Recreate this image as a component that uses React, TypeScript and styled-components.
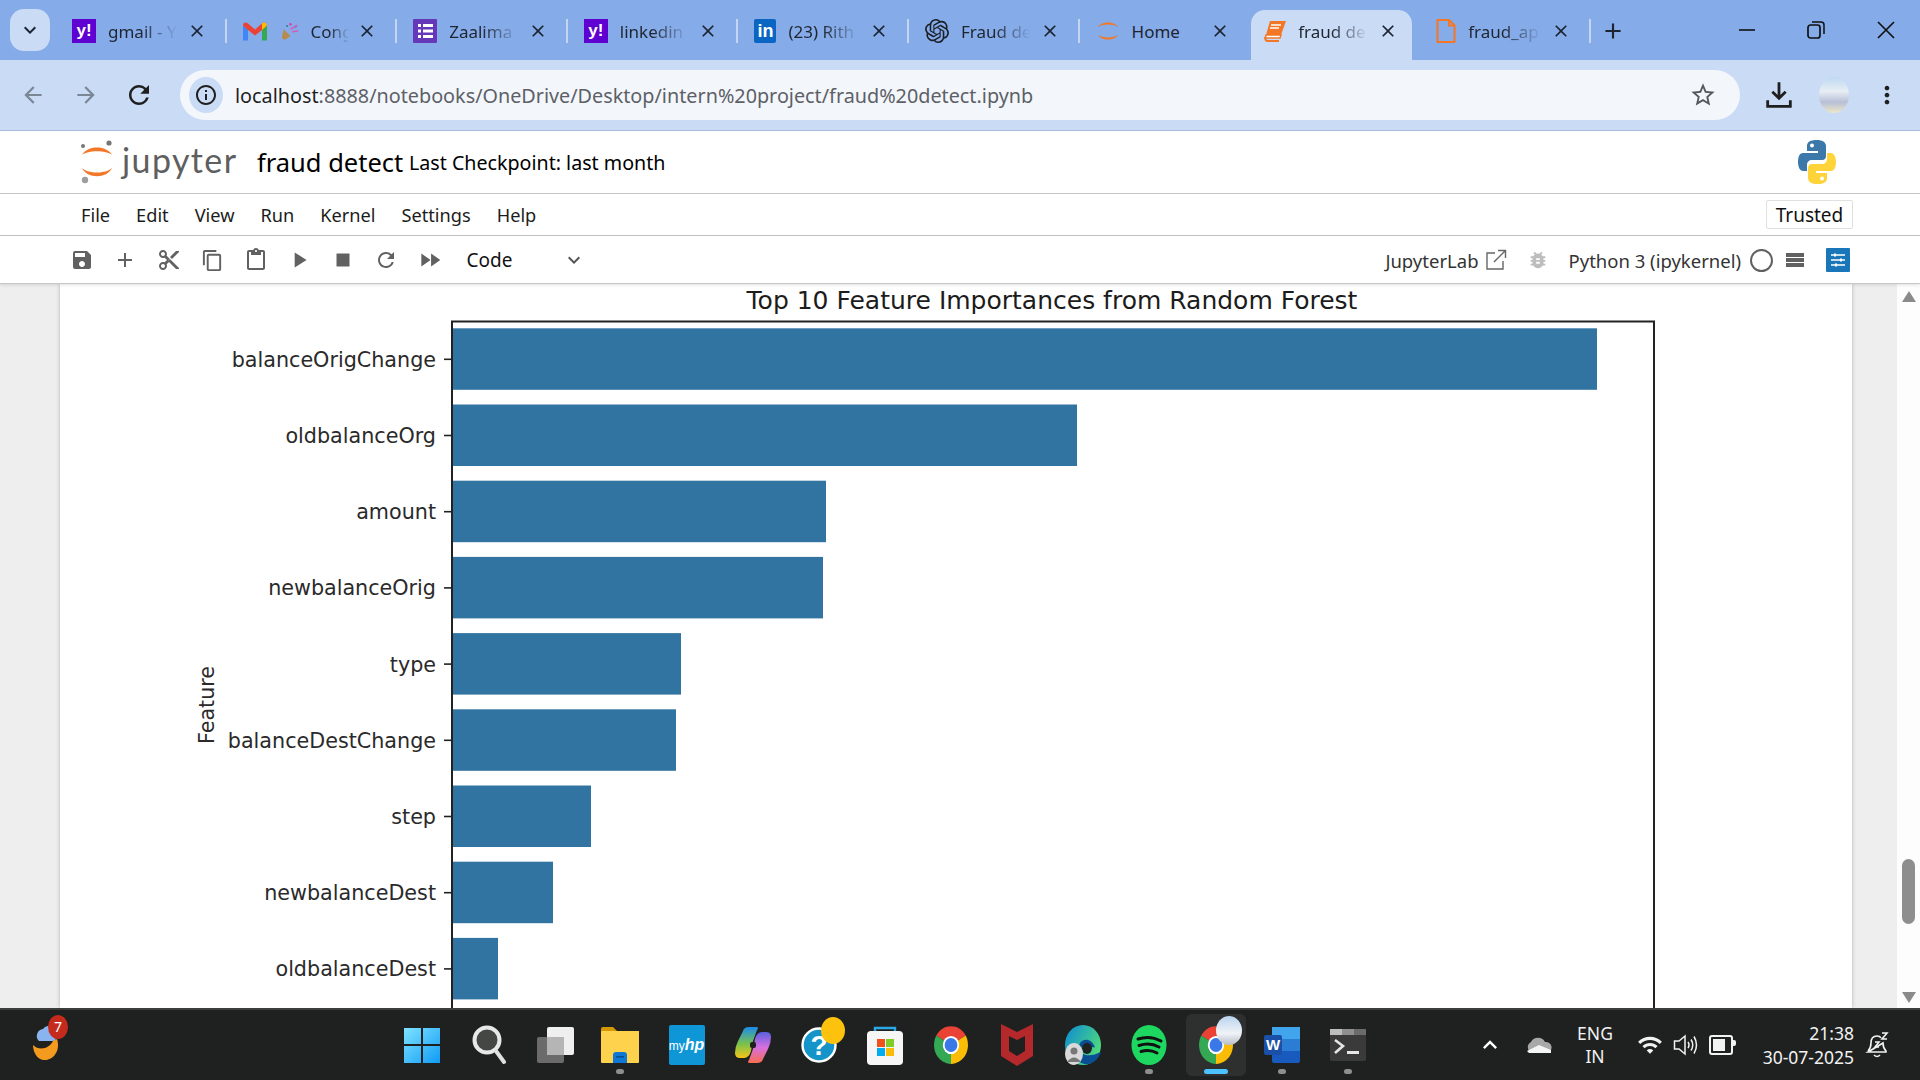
import React from "react";
import styled, { createGlobalStyle } from "styled-components";
import {
  MdAdd,
  MdArrowBack,
  MdArrowForward,
  MdBugReport,
  MdClose,
  MdContentCopy,
  MdContentCut,
  MdContentPaste,
  MdFastForward,
  MdKeyboardArrowDown,
  MdMoreVert,
  MdPlayArrow,
  MdRefresh,
  MdSave,
  MdStop,
  MdStarBorder,
  MdOutlineInfo,
  MdKeyboardArrowUp,
  MdWifi,
} from "react-icons/md";
import { SiOpenai } from "react-icons/si";

const GlobalStyle = createGlobalStyle`
  html, body { margin: 0; padding: 0; height: 100%; overflow: hidden; }
  body { font-family: "Noto Sans", "Open Sans", sans-serif; }
`;

const JupyterMark = ({ size = 24 }: { size?: number }) => (
  <svg width={size} height={size} viewBox="0 0 36 36">
    <path d="M3 12 C8 3 28 3 33 12 C27 7 9 7 3 12Z" fill="#F37726" />
    <path d="M3 24 C8 33 28 33 33 24 C27 29 9 29 3 24Z" fill="#F37726" />
  </svg>
);

const YahooIcon = () => <YahooBox>y!</YahooBox>;
const LinkedinIcon = () => <LinkedinBox>in</LinkedinBox>;

const GmailIcon = () => (
  <svg width="24" height="19" viewBox="0 0 24 18">
    <path d="M0 3 L0 18 L5 18 L5 7Z" fill="#4285F4" />
    <path d="M24 3 L24 18 L19 18 L19 7Z" fill="#34A853" />
    <path d="M0 3 C0 0 3 -1 5 1 L12 7 L19 1 C21 -1 24 0 24 3 L19 7.5 L12 13 L5 7.5Z" fill="#EA4335" />
    <path d="M19 1 C21 -1 24 0 24 3 L19 7.5Z" fill="#FBBC04" />
  </svg>
);

const PartyIcon = () => (
  <svg width="17" height="22" viewBox="0 0 20 22">
    <path d="M2 9 L10 17 L4 21 Q0 21 0 18Z" fill="#b98a4e" />
    <circle cx="10" cy="3" r="1.5" fill="#e040a0" />
    <circle cx="16" cy="6" r="1.5" fill="#4a90e2" />
    <circle cx="6" cy="5" r="1.2" fill="#2e7d9a" />
    <path d="M10 9 L18 4 M12 12 L19 11" stroke="#d65cb8" strokeWidth="1.8" />
  </svg>
);

const FormIcon = () => (
  <svg width="24" height="24" viewBox="0 0 24 24">
    <rect width="24" height="24" rx="1" fill="#6438B8" />
    <rect x="5" y="5" width="3" height="3" fill="#fff" />
    <rect x="10" y="5" width="10" height="3" fill="#fff" />
    <rect x="5" y="10.5" width="3" height="3" fill="#fff" />
    <rect x="10" y="10.5" width="10" height="3" fill="#fff" />
    <rect x="5" y="16" width="3" height="3" fill="#fff" />
    <rect x="10" y="16" width="10" height="3" fill="#fff" />
  </svg>
);

const BookIcon = () => (
  <svg width="22" height="22" viewBox="0 0 22 22">
    <path d="M6 1 H22 L17 15 H2Z" fill="#F37726" />
    <path d="M7 5 H17 M6 8 H15" stroke="#fff" strokeWidth="1.5" />
    <path d="M2 15 H17 L16 18 H3 Q1 18 2 15Z" fill="#fff" stroke="#F37726" strokeWidth="1.5" />
    <path d="M1 17 Q1 21 4 21 H15" fill="none" stroke="#F37726" strokeWidth="2" />
  </svg>
);

const FileIcon = () => (
  <svg width="20" height="24" viewBox="0 0 20 24">
    <path d="M1.5 1 H13 L18.5 6.5 V23 H1.5Z M13 1 V6.5 H18.5" fill="none" stroke="#F37726" strokeWidth="2" />
  </svg>
);

const tabs = [
  { title: "gmail - Y", icon: [<YahooIcon key="a" />] },
  { title: "Cong", icon: [<GmailIcon key="a" />, <PartyIcon key="b" />] },
  { title: "Zaalima", icon: [<FormIcon key="a" />] },
  { title: "linkedin", icon: [<YahooIcon key="a" />] },
  { title: "(23) Rith", icon: [<LinkedinIcon key="a" />] },
  { title: "Fraud de", icon: [<SiOpenai key="a" size={24} color="#1b1f27" />] },
  { title: "Home", icon: [<JupyterMark key="a" />], full: true },
  { title: "fraud de", icon: [<BookIcon key="a" />], active: true },
  { title: "fraud_ap", icon: [<FileIcon key="a" />] },
];

const menuItems = ["File", "Edit", "View", "Run", "Kernel", "Settings", "Help"];

const features = [
  { name: "balanceOrigChange", width: 1145 },
  { name: "oldbalanceOrg", width: 625 },
  { name: "amount", width: 374 },
  { name: "newbalanceOrig", width: 371 },
  { name: "type", width: 229 },
  { name: "balanceDestChange", width: 224 },
  { name: "step", width: 139 },
  { name: "newbalanceDest", width: 101 },
  { name: "oldbalanceDest", width: 46 },
];

const FeatureChart = () => (
  <svg width="1792" height="724" viewBox="60 284 1792 724">
    <text x="1052" y="309" textAnchor="middle" fontFamily="DejaVu Sans" fontSize="25" fill="#1c1c1c">
      Top 10 Feature Importances from Random Forest
    </text>
    {features.map((f, i) => {
      const top = 328.3 + i * 76.2;
      return (
        <g key={f.name}>
          <rect x="452" y={top} width={f.width} height="61.5" fill="#3274A1" />
          <line x1="444" x2="452" y1={top + 31} y2={top + 31} stroke="#222" strokeWidth="1.6" />
          <text x="436" y={top + 38.5} textAnchor="end" fontFamily="DejaVu Sans" fontSize="20.7" fill="#2a2a2a">
            {f.name}
          </text>
        </g>
      );
    })}
    <path d="M452 1010 V321.5 H1654 V1010" fill="none" stroke="#222" strokeWidth="2" />
    <text
      transform="translate(214 705) rotate(-90)"
      textAnchor="middle"
      fontFamily="DejaVu Sans"
      fontSize="20.7"
      fill="#2a2a2a"
    >
      Feature
    </text>
  </svg>
);

const WeatherIcon = () => (
  <svg width="36" height="42" viewBox="0 0 36 42">
    <path d="M8 22 A7 7 0 0 1 12 10 A7 7 0 0 1 24 18 Q26 22 22 22Z" fill="#8AB4F0" />
    <path d="M2 26 C8 32 18 30 22 22 L26 20 C30 32 22 42 12 41 C6 40 2 33 2 26Z" fill="#F39A1F" />
  </svg>
);

const WindowsIcon = () => (
  <svg width="36" height="36" viewBox="0 0 36 36">
    <defs>
      <linearGradient id="win" x1="0" y1="0" x2="1" y2="1">
        <stop offset="0" stopColor="#7FE3FF" />
        <stop offset="1" stopColor="#0F9BF5" />
      </linearGradient>
    </defs>
    <path d="M0 1 H17 V17 H0Z M19 1 H36 V17 H19Z M0 19 H17 V36 H0Z M19 19 H36 V36 H19Z" fill="url(#win)" />
  </svg>
);

const SearchIcon = () => (
  <svg width="36" height="40" viewBox="0 0 36 40">
    <circle cx="17" cy="15" r="12.5" fill="#454745" stroke="#e8e8e8" strokeWidth="4" />
    <path d="M26 26 L34 37" stroke="#e0e0e0" strokeWidth="4" strokeLinecap="round" />
  </svg>
);

const TaskViewIcon = () => (
  <svg width="40" height="38" viewBox="0 0 40 38">
    <rect x="3" y="11" width="27" height="26" rx="2" fill="#6b6b6b" />
    <rect x="13" y="1" width="27" height="28" rx="2" fill="#efefef" />
    <rect x="13" y="11" width="17" height="18" fill="#b5b5b5" />
  </svg>
);

const ExplorerIcon = () => (
  <svg width="38" height="38" viewBox="0 0 38 38">
    <path d="M0 3 Q0 1 2 1 H12 L16 5 H38 V12 H0Z" fill="#D49A06" />
    <rect y="5" width="38" height="32" rx="1" fill="#FFD24D" />
    <path d="M12 37 V29 Q12 26 15 26 H23 Q26 26 26 29 V37Z" fill="#0F78D4" />
    <rect x="15" y="30" width="8" height="1.6" fill="#084F8F" />
  </svg>
);

const HpIcon = () => (
  <HpTile>
    my<em>hp</em>
  </HpTile>
);

const CopilotIcon = () => (
  <svg width="36" height="36" viewBox="0 0 36 36">
    <defs>
      <linearGradient id="cop1" x1="0" y1="0" x2="0" y2="1">
        <stop offset="0" stopColor="#1C8CEB" />
        <stop offset="0.55" stopColor="#7BC24A" />
        <stop offset="1" stopColor="#F5C518" />
      </linearGradient>
      <linearGradient id="cop2" x1="0" y1="0" x2="0" y2="1">
        <stop offset="0" stopColor="#5A5FE0" />
        <stop offset="0.5" stopColor="#D770E0" />
        <stop offset="1" stopColor="#F76D4E" />
      </linearGradient>
    </defs>
    <path d="M8 4 Q9 0 14 0 H22 Q24 1 22 3 L18 14 L16 24 Q14 31 9 31 H5 Q0 31 0 26 Q0 20 3 14Z" fill="url(#cop1)" />
    <path d="M28 32 Q27 36 22 36 H14 Q12 35 14 33 L18 22 L20 12 Q22 5 27 5 H31 Q36 5 36 10 Q36 16 33 22Z" fill="url(#cop2)" />
    <rect x="15" y="15" width="6" height="6" rx="2" fill="#1F2120" />
  </svg>
);

const HelpIcon = () => (
  <HelpWrap>
    <svg width="36" height="40" viewBox="0 0 36 40">
      <circle cx="18" cy="20" r="16.5" fill="#1594C9" stroke="#fff" strokeWidth="2.4" />
      <text x="18" y="30" textAnchor="middle" fontFamily="Liberation Sans" fontWeight="700" fontSize="28" fill="#fff">
        ?
      </text>
    </svg>
    <HelpDot />
  </HelpWrap>
);

const StoreIcon = () => (
  <svg width="36" height="40" viewBox="0 0 36 40">
    <path d="M8 9 V3 H28 V9" fill="none" stroke="#29A9E8" strokeWidth="2.4" />
    <rect y="6" width="36" height="34" rx="4" fill="#f6f6f6" />
    <rect x="10" y="14" width="8" height="8" fill="#F1511B" />
    <rect x="19" y="14" width="8" height="8" fill="#80CC28" />
    <rect x="10" y="23" width="8" height="8" fill="#00ADEF" />
    <rect x="19" y="23" width="8" height="8" fill="#FBBC09" />
  </svg>
);

const ChromeIcon = () => (
  <svg width="36" height="40" viewBox="0 0 36 36" preserveAspectRatio="none">
    <path d="M18 18 L3.3 9.5 A17 17 0 0 1 32.7 9.5Z" fill="#EA4335" />
    <path d="M18 18 L32.7 9.5 A17 17 0 0 1 18 35Z" fill="#FBBC05" />
    <path d="M18 18 L18 35 A17 17 0 0 1 3.3 9.5Z" fill="#34A853" />
    <circle cx="18" cy="18" r="8.2" fill="#fff" />
    <circle cx="18" cy="18" r="6.4" fill="#3B78E7" />
  </svg>
);

const McafeeIcon = () => (
  <svg width="32" height="42" viewBox="0 0 32 42">
    <path d="M0 0 L16 8 L32 0 V32 L16 42 L0 32Z M8 12 V27 L16 32 L24 27 V12 L16 16Z" fill="#B5282B" fillRule="evenodd" />
  </svg>
);

const EdgeIcon = () => (
  <EdgeWrap>
    <svg width="36" height="40" viewBox="0 0 36 36" preserveAspectRatio="none">
      <defs>
        <linearGradient id="edge" x1="0" y1="0" x2="1" y2="0.6">
          <stop offset="0" stopColor="#0C8AD6" />
          <stop offset="1" stopColor="#4FDB7B" />
        </linearGradient>
      </defs>
      <circle cx="18" cy="18" r="18" fill="url(#edge)" />
      <path d="M14 20 C14 12 26 10 30 20 H16 C14 27 24 30 36 24 C32 36 16 40 10 28Z" fill="#0A4E94" />
      <circle cx="22" cy="21" r="5" fill="#1E2320" />
    </svg>
    <EdgeAvatar>
      <svg width="18" height="18" viewBox="0 0 18 18">
        <circle cx="9" cy="6" r="3.5" fill="#777" />
        <path d="M2 17 Q9 8 16 17Z" fill="#777" />
      </svg>
    </EdgeAvatar>
  </EdgeWrap>
);

const SpotifyIcon = () => (
  <svg width="36" height="40" viewBox="0 0 36 40">
    <ellipse cx="18" cy="20" rx="17.5" ry="20" fill="#1ED760" />
    <path d="M7 14 Q19 10 30 16 M8 20.5 Q19 17 28 22 M10 26.5 Q19 24 26 28" fill="none" stroke="#111" strokeWidth="3" strokeLinecap="round" />
  </svg>
);

const ActiveChromeIcon = () => (
  <ChromeWrap>
    <ChromeIcon />
    <ProfileBubble />
  </ChromeWrap>
);

const WordIcon = () => (
  <svg width="36" height="36" viewBox="0 0 36 36">
    <rect x="8" y="0" width="28" height="36" rx="2" fill="#185ABD" />
    <rect x="8" y="0" width="28" height="12" fill="#41A5EE" />
    <rect x="8" y="12" width="28" height="12" fill="#2B7CD3" />
    <rect x="0" y="8" width="18" height="20" rx="2" fill="#1A50A8" />
    <text x="9" y="23" textAnchor="middle" fontFamily="Liberation Sans" fontWeight="700" fontSize="15" fill="#fff">
      W
    </text>
  </svg>
);

const TerminalIcon = () => (
  <svg width="36" height="32" viewBox="0 0 36 32">
    <rect width="36" height="32" rx="2" fill="#3a3a3a" />
    <rect width="12" height="6" fill="#bdbdbd" />
    <rect x="12" width="12" height="6" fill="#8f8f8f" />
    <rect x="24" width="12" height="6" fill="#6b6b6b" />
    <path d="M5 11 L13 17 L5 24" fill="none" stroke="#e6e6e6" strokeWidth="2.6" />
    <rect x="17" y="22" width="12" height="3" fill="#e6e6e6" />
  </svg>
);

const apps = [
  { icon: <WindowsIcon /> },
  { icon: <SearchIcon /> },
  { icon: <TaskViewIcon /> },
  { icon: <ExplorerIcon />, dot: true },
  { icon: <HpIcon /> },
  { icon: <CopilotIcon /> },
  { icon: <HelpIcon /> },
  { icon: <StoreIcon /> },
  { icon: <ChromeIcon /> },
  { icon: <McafeeIcon /> },
  { icon: <EdgeIcon /> },
  { icon: <SpotifyIcon />, dot: true },
  { icon: <ActiveChromeIcon />, active: true },
  { icon: <WordIcon />, dot: true },
  { icon: <TerminalIcon />, dot: true },
];

const App = () => {
  return (
    <Page>
      <GlobalStyle />
      <TabStrip>
        <TabSearch>
          <MdKeyboardArrowDown size={24} />
        </TabSearch>
        {tabs.map((t) => (
          <Tab key={t.title} $active={t.active} $noDivider={t.title === "Home" || t.active}>
            <Favicons>{t.icon}</Favicons>
            <TabTitle $full={t.full}>{t.title}</TabTitle>
            <TabClose>
              <MdClose size={20} />
            </TabClose>
          </Tab>
        ))}
        <NewTab>
          <MdAdd size={26} />
        </NewTab>
        <WindowButtons>
          <svg width="16" height="16" viewBox="0 0 16 16">
            <path d="M0 8 H16" stroke="#111" strokeWidth="1.6" />
          </svg>
          <svg width="18" height="18" viewBox="0 0 18 18">
            <rect x="1" y="4" width="12" height="13" rx="2.5" fill="none" stroke="#111" strokeWidth="1.7" />
            <path d="M5 1 H14 Q17 1 17 4 V13" fill="none" stroke="#111" strokeWidth="1.5" />
          </svg>
          <svg width="18" height="18" viewBox="0 0 18 18">
            <path d="M1 1 L17 17 M17 1 L1 17" stroke="#111" strokeWidth="1.7" />
          </svg>
        </WindowButtons>
      </TabStrip>

      <NavBar>
        <NavIcon $dim>
          <MdArrowBack size={26} />
        </NavIcon>
        <NavIcon $dim>
          <MdArrowForward size={26} />
        </NavIcon>
        <NavIcon>
          <MdRefresh size={30} />
        </NavIcon>
        <AddressPill>
          <InfoBadge>
            <MdOutlineInfo size={24} />
          </InfoBadge>
          <Url>
            <strong>localhost</strong>:8888/notebooks/OneDrive/Desktop/intern%20project/fraud%20detect.ipynb
          </Url>
          <MdStarBorder size={28} color="#55585c" />
        </AddressPill>
        <NavActions>
          <svg width="32" height="32" viewBox="0 0 24 24">
            <path d="M12 2.5 V14 M7 9.5 L12 14.5 L17 9.5" fill="none" stroke="#1f1f1f" strokeWidth="2.1" />
            <path d="M3.5 16 V20.5 H20.5 V16" fill="none" stroke="#1f1f1f" strokeWidth="2.1" />
          </svg>
          <Avatar />
          <MdMoreVert size={28} color="#1f1f1f" />
        </NavActions>
      </NavBar>

      <JupyterHeader>
        <LogoMark>
          <svg width="36" height="44" viewBox="0 0 36 44">
            <path d="M3 15 C8 5 28 5 33 15 C27 10 9 10 3 15Z" fill="#F37726" />
            <path d="M3 28 C8 39 28 39 33 28 C27 34 9 34 3 28Z" fill="#F37726" />
            <circle cx="4" cy="6" r="2" fill="#767677" />
            <circle cx="30" cy="3" r="2.6" fill="#767677" />
            <circle cx="6" cy="40" r="3.2" fill="#9e9e9e" />
          </svg>
        </LogoMark>
        <LogoText>jupyter</LogoText>
        <NotebookName>fraud detect</NotebookName>
        <Checkpoint>Last Checkpoint: last month</Checkpoint>
        <PythonLogo>
          <svg width="38" height="46" viewBox="0 0 38 46">
            <path d="M19 1 C12 1 9 3 9 7 V12 H20 V14 H5 C1 14 0 19 0 23 C0 28 2 32 5 32 H9 V26 C9 23 11 21 14 21 H24 C27 21 28 19 28 17 V7 C28 3 24 1 19 1Z" fill="#3C78AA" />
            <circle cx="14" cy="6.5" r="2" fill="#fff" />
            <path d="M19 45 C26 45 29 43 29 39 V34 H18 V32 H33 C37 32 38 27 38 23 C38 18 36 14 33 14 H29 V20 C29 23 27 25 24 25 H14 C11 25 10 27 10 29 V39 C10 43 14 45 19 45Z" fill="#FFD43B" />
            <circle cx="24" cy="39.5" r="2" fill="#fff" />
          </svg>
        </PythonLogo>
      </JupyterHeader>

      <MenuBar>
        {menuItems.map((m) => (
          <MenuItem key={m}>{m}</MenuItem>
        ))}
        <TrustedButton>Trusted</TrustedButton>
      </MenuBar>

      <NotebookToolbar>
        <ToolIcon><MdSave size={24} /></ToolIcon>
        <ToolIcon><MdAdd size={24} /></ToolIcon>
        <ToolIcon><MdContentCut size={24} /></ToolIcon>
        <ToolIcon><MdContentCopy size={23} /></ToolIcon>
        <ToolIcon><MdContentPaste size={24} /></ToolIcon>
        <ToolIcon><MdPlayArrow size={26} /></ToolIcon>
        <ToolIcon><MdStop size={26} /></ToolIcon>
        <ToolIcon><MdRefresh size={24} /></ToolIcon>
        <ToolIcon><MdFastForward size={26} /></ToolIcon>
        <CellType>
          Code
          <MdKeyboardArrowDown size={24} color="#555" />
        </CellType>
        <KernelArea>
          <LabLink>
            JupyterLab
            <svg width="22" height="22" viewBox="0 0 22 22">
              <path d="M10 4 H2 V20 H18 V12 M13 1.5 H20.5 V9 M20.5 1.5 L9 13" fill="none" stroke="#666" strokeWidth="1.4" />
            </svg>
          </LabLink>
          <MdBugReport size={22} color="#bdbdbd" />
          <KernelName>Python 3 (ipykernel)</KernelName>
          <KernelCircle />
          <MenuLines />
          <PropertyButton>
            <svg width="16" height="16" viewBox="0 0 16 16">
              <path d="M1 3 H15 M1 8 H15 M1 13 H15" stroke="#fff" strokeWidth="1.4" />
              <path d="M5 1.5 V4.5 M11 6.5 V9.5 M6 11.5 V14.5" stroke="#fff" strokeWidth="2" />
            </svg>
          </PropertyButton>
        </KernelArea>
      </NotebookToolbar>

      <Workspace>
        <Gutter />
        <NotebookPanel>
          <FeatureChart />
        </NotebookPanel>
        <GutterRight />
        <ScrollBar>
          <ArrowUp />
          <ScrollThumb />
          <ArrowDown />
        </ScrollBar>
      </Workspace>

      <Taskbar>
        <WeatherSlot>
          <WeatherIcon />
          <WeatherBadge>7</WeatherBadge>
        </WeatherSlot>
        <Apps>
          {apps.map((a, i) => (
            <AppButton key={i} $active={a.active}>
              {a.icon}
              {a.dot && <AppDot />}
              {a.active && <AppBar />}
            </AppButton>
          ))}
        </Apps>
        <Tray>
          <TrayChevron>
            <MdKeyboardArrowUp size={28} color="#fff" />
          </TrayChevron>
          <svg width="26" height="16" viewBox="0 0 26 16">
            <path d="M6 16 A6 6 0 0 1 5 5 A8 8 0 0 1 19 5 A5.5 5.5 0 0 1 21 16Z" fill="#a8a8a8" />
            <path d="M1 14 L13 8 L25 13 V16 H3Z" fill="#f4f4f4" />
          </svg>
          <LangBlock>
            ENG
            <br />
            IN
          </LangBlock>
          <StatusIcons>
            <MdWifi size={26} color="#f2f2f2" />
            <svg width="26" height="24" viewBox="0 0 26 24">
              <path d="M1.5 8 H6 L12 3 V21 L6 16 H1.5Z" fill="none" stroke="#f2f2f2" strokeWidth="1.5" />
              <path d="M15 9 Q17 12 15 15 M18 6.5 Q21.5 12 18 17.5 M21 3.5 Q26 12 21 20.5" fill="none" stroke="#f2f2f2" strokeWidth="1.5" />
            </svg>
            <BatteryShell>
              <BatteryFill />
            </BatteryShell>
          </StatusIcons>
          <Clock>
            21:38
            <br />
            30-07-2025
          </Clock>
          <svg width="24" height="28" viewBox="0 0 24 28">
            <path d="M3 20 Q6 17 6 12 Q6 5 12 5 Q15 5 16 7 M18 12 Q18 17 21 20 V21 H3Z M9 24 Q12 27 15 24" fill="none" stroke="#f2f2f2" strokeWidth="1.6" />
            <path d="M10 11 H14 L10 16 H14 M17 2 H22 L17 8 H22" fill="none" stroke="#f2f2f2" strokeWidth="1.6" />
          </svg>
        </Tray>
      </Taskbar>
    </Page>
  );
};

export default App;

const Page = styled.div`
  width: 1920px;
  height: 1080px;
  display: flex;
  flex-direction: column;
  overflow: hidden;
  background: #fff;
`;

const TabStrip = styled.div`
  height: 60px;
  flex: none;
  display: flex;
  align-items: flex-end;
  background: #85abe9;
  padding-left: 10px;
`;

const TabSearch = styled.div`
  width: 40px;
  height: 42px;
  margin: 0 6px 9px 0;
  border-radius: 14px;
  background: #cadbf6;
  display: flex;
  align-items: center;
  justify-content: center;
  color: #1c2431;
`;

const Tab = styled.div<{ $active?: boolean; $noDivider?: boolean }>`
  position: relative;
  width: 170.6px;
  height: 50px;
  flex: none;
  box-sizing: border-box;
  display: flex;
  align-items: center;
  padding: 0 14px 8px 16px;
  border-radius: 14px 14px 0 0;
  background: ${(p) => (p.$active ? "#cadbf6" : "transparent")};
  margin-left: ${(p) => (p.$active ? "1px" : "0")};

  ${(p) =>
    p.$active
      ? `
    width: 161px;
    margin-right: 8px;
    padding-left: 13px;
    padding-right: 8px;
  `
      : ""}

  &::after {
    content: "";
    display: ${(p) => (p.$noDivider ? "none" : "block")};
    position: absolute;
    right: 0;
    top: 9px;
    width: 2px;
    height: 24px;
    background: #c3d5f3;
  }
`;

const Favicons = styled.div`
  display: flex;
  align-items: center;
  gap: 15px;
  flex: none;
  margin-right: 12px;
`;

const YahooBox = styled.div`
  width: 24px;
  height: 24px;
  background: #5f01d1;
  color: #fff;
  font: 700 17px/24px "Liberation Sans", sans-serif;
  text-align: center;
`;

const LinkedinBox = styled.div`
  width: 22px;
  height: 24px;
  border-radius: 2px;
  background: #0a66c2;
  color: #fff;
  font: 700 18px/25px "Liberation Sans", sans-serif;
  text-align: center;
`;

const TabTitle = styled.div<{ $full?: boolean }>`
  flex: 1;
  min-width: 0;
  overflow: hidden;
  white-space: nowrap;
  font-size: 17px;
  color: #1f2530;
  ${(p) =>
    p.$full
      ? ""
      : `
    mask-image: linear-gradient(to right, #000 45%, transparent 95%);
  `}
`;

const TabClose = styled.div`
  flex: none;
  display: flex;
  margin-left: 6px;
  margin-right: 6px;
  color: #1c2431;
`;

const NewTab = styled.div`
  height: 50px;
  box-sizing: border-box;
  padding-bottom: 8px;
  display: flex;
  align-items: center;
  margin-left: 9px;
  color: #1c2431;
`;

const WindowButtons = styled.div`
  margin-left: auto;
  height: 60px;
  width: 181px;
  display: flex;
  align-items: center;
  justify-content: space-between;
  padding-right: 25px;
  box-sizing: border-box;
`;

const NavBar = styled.div`
  height: 70px;
  flex: none;
  display: flex;
  align-items: center;
  background: #cadbf6;
  border-bottom: 1px solid #a7bcdc;
  padding: 0 0 0 14px;
`;

const NavIcon = styled.div<{ $dim?: boolean }>`
  width: 38px;
  margin-right: 15px;
  display: flex;
  justify-content: center;
  color: ${(p) => (p.$dim ? "#7c8795" : "#1f1f1f")};
`;

const AddressPill = styled.div`
  width: 1560px;
  height: 50px;
  margin-left: 7px;
  border-radius: 25px;
  background: #f3f7fc;
  display: flex;
  align-items: center;
  padding: 0 23px 0 9px;
  box-sizing: border-box;
  flex: none;
`;

const InfoBadge = styled.div`
  width: 34px;
  height: 36px;
  border-radius: 50%;
  background: #cadbf6;
  display: flex;
  align-items: center;
  justify-content: center;
  color: #1f1f1f;
  flex: none;
`;

const Url = styled.div`
  flex: 1;
  margin-left: 12px;
  font-size: 19.8px;
  color: #5d6066;
  white-space: nowrap;

  strong {
    font-weight: 400;
    color: #1f1f1f;
  }
`;

const NavActions = styled.div`
  flex: 1;
  display: flex;
  align-items: center;
  justify-content: space-between;
  padding: 0 19px 0 23px;
`;

const Avatar = styled.div`
  width: 30px;
  height: 36px;
  border-radius: 50%;
  background: linear-gradient(#bcd9f2 0%, #e9eef4 40%, #b7bfd6 70%, #eee7c8 100%);
`;

const JupyterHeader = styled.div`
  height: 62px;
  flex: none;
  display: flex;
  align-items: center;
  border-bottom: 1px solid #c4c4c4;
  padding-left: 79px;
  background: #fff;
`;

const LogoMark = styled.div`
  display: flex;
  width: 43px;
`;

const LogoText = styled.div`
  font-family: "Lato", sans-serif;
  font-size: 34px;
  color: #5f5f5f;
  letter-spacing: 1.4px;
  margin-top: -6px;
  width: 135px;
`;

const NotebookName = styled.div`
  font-size: 25.5px;
  color: #000;
  width: 152px;
`;

const Checkpoint = styled.div`
  font-size: 19.65px;
  color: #000;
`;

const PythonLogo = styled.div`
  margin-left: auto;
  margin-right: 84px;
  display: flex;
`;

const MenuBar = styled.div`
  height: 41px;
  flex: none;
  display: flex;
  align-items: center;
  gap: 26px;
  padding: 0 67px 0 81px;
  border-bottom: 1px solid #c4c4c4;
  background: #fff;
`;

const MenuItem = styled.div`
  font-size: 18.2px;
  color: #1c1c1c;
`;

const TrustedButton = styled.div`
  margin-left: auto;
  width: 87px;
  height: 29px;
  box-sizing: border-box;
  border: 1px solid #e0e0e0;
  border-radius: 2px;
  display: flex;
  align-items: center;
  justify-content: center;
  font-size: 19px;
  color: #111;
`;

const NotebookToolbar = styled.div`
  flex: none;
  display: flex;
  align-items: center;
  padding: 1px 70px 0 60px;
  box-sizing: border-box;
  height: 48px;
  border-bottom: 1px solid #c8c8c8;
  box-shadow: 0 1px 3px rgba(0, 0, 0, 0.12);
  position: relative;
  z-index: 2;
  background: #fff;
`;

const ToolIcon = styled.div`
  width: 43.5px;
  display: flex;
  justify-content: center;
  color: #616161;
  flex: none;
`;

const CellType = styled.div`
  width: 119px;
  margin-left: 15px;
  display: flex;
  align-items: center;
  justify-content: space-between;
  font-size: 19px;
  color: #111;
`;

const KernelArea = styled.div`
  margin-left: auto;
  display: flex;
  align-items: center;
`;

const LabLink = styled.div`
  display: flex;
  align-items: center;
  gap: 6px;
  font-size: 18.5px;
  color: #333;
  margin-right: 20px;
`;

const KernelName = styled.div`
  font-size: 18.5px;
  color: #333;
  margin: 0 9px 0 20px;
`;

const KernelCircle = styled.div`
  width: 19px;
  height: 19px;
  border: 2px solid #616161;
  border-radius: 50%;
  margin-right: 13px;
`;

const MenuLines = styled.div`
  width: 18px;
  height: 6px;
  border-top: 4px solid #616161;
  border-bottom: 4px solid #616161;
  position: relative;
  margin-right: 22px;

  &::after {
    content: "";
    position: absolute;
    left: 0;
    right: 0;
    top: 1px;
    height: 4px;
    background: #616161;
  }
`;

const PropertyButton = styled.div`
  width: 24px;
  height: 24px;
  background: #1976b8;
  display: flex;
  align-items: center;
  justify-content: center;
  border-radius: 1px;
`;

const Workspace = styled.div`
  flex: 1;
  min-height: 0;
  display: flex;
  overflow: hidden;
`;

const Gutter = styled.div`
  width: 60px;
  background: #eeeeee;
  flex: none;
`;

const NotebookPanel = styled.div`
  width: 1792px;
  flex: none;
  background: #fff;
  box-shadow: 0 0 4px rgba(0, 0, 0, 0.25);
  position: relative;
  display: flex;
`;

const GutterRight = styled.div`
  width: 45px;
  background: #eeeeee;
  flex: none;
`;

const ScrollBar = styled.div`
  flex: 1;
  background: #fdfdfd;
  display: flex;
  flex-direction: column;
  align-items: center;
  padding: 7px 0 5px;
  box-sizing: border-box;
`;

const ArrowUp = styled.div`
  width: 0;
  height: 0;
  border-left: 7.5px solid transparent;
  border-right: 7.5px solid transparent;
  border-bottom: 11px solid #8a8a8a;
`;

const ArrowDown = styled.div`
  width: 0;
  height: 0;
  border-left: 7.5px solid transparent;
  border-right: 7.5px solid transparent;
  border-top: 11px solid #8a8a8a;
`;

const ScrollThumb = styled.div`
  width: 13px;
  height: 65px;
  border-radius: 7px;
  background: #8e8e8e;
  margin-top: auto;
  margin-bottom: 68px;
`;

const Taskbar = styled.div`
  height: 72px;
  flex: none;
  box-sizing: border-box;
  border-top: 2px solid #3d3d3b;
  background: #1f2120;
  display: flex;
  align-items: center;
  position: relative;
  z-index: 3;
`;

const WeatherSlot = styled.div`
  position: relative;
  width: 36px;
  margin-left: 31px;
  display: flex;
  margin-top: -10px;
`;

const WeatherBadge = styled.div`
  position: absolute;
  left: 17px;
  top: -4px;
  width: 20px;
  height: 24px;
  border-radius: 50%;
  background: #c42b1c;
  color: #fff;
  font-size: 14px;
  line-height: 24px;
  text-align: center;
`;

const Apps = styled.div`
  display: flex;
  margin-left: 325px;
`;

const AppButton = styled.div<{ $active?: boolean }>`
  position: relative;
  width: 60px;
  height: 62px;
  margin-right: 6.14px;
  display: flex;
  align-items: center;
  justify-content: center;
  border-radius: 6px;
  background: ${(p) => (p.$active ? "#2e2f2f" : "transparent")};
`;

const AppDot = styled.div`
  position: absolute;
  left: 50%;
  bottom: 2px;
  width: 8px;
  height: 5px;
  margin-left: -4px;
  border-radius: 3px;
  background: #8e8e8e;
`;

const AppBar = styled.div`
  position: absolute;
  left: 18px;
  bottom: 2px;
  width: 24px;
  height: 5px;
  border-radius: 3px;
  background: #4cc2ff;
`;

const HpTile = styled.div`
  width: 36px;
  height: 40px;
  border-radius: 2px;
  background: #0e96d6;
  color: #fff;
  font: 400 12px/40px "Liberation Sans", sans-serif;
  text-align: center;

  em {
    font-size: 16px;
    font-weight: 700;
  }
`;

const HelpWrap = styled.div`
  position: relative;
  display: flex;
`;

const HelpDot = styled.div`
  position: absolute;
  right: -8px;
  top: -8px;
  width: 24px;
  height: 27px;
  border-radius: 50%;
  background: #fdc20d;
`;

const EdgeWrap = styled.div`
  position: relative;
  display: flex;
`;

const EdgeAvatar = styled.div`
  position: absolute;
  left: 0;
  bottom: 0;
  width: 18px;
  height: 22px;
  border-radius: 50%;
  background: #d9d9d9;
  display: flex;
  align-items: center;
  justify-content: center;
`;

const ChromeWrap = styled.div`
  position: relative;
  display: flex;
`;

const ProfileBubble = styled.div`
  position: absolute;
  right: -8px;
  top: -9px;
  width: 26px;
  height: 29px;
  border-radius: 50%;
  background: linear-gradient(#b9d3ef, #f0f3f6 60%, #b7bccb);
`;

const Tray = styled.div`
  position: relative;
  margin-left: auto;
  display: flex;
  align-items: center;
  padding-right: 31px;
`;

const TrayChevron = styled.div`
  display: flex;
  margin-right: 22px;
`;

const LangBlock = styled.div`
  width: 56px;
  margin-left: 15px;
  text-align: center;
  font-size: 17.5px;
  line-height: 23px;
  color: #f2f2f2;
`;

const StatusIcons = styled.div`
  display: flex;
  align-items: center;
  gap: 10px;
  margin-left: 14px;
`;

const BatteryShell = styled.div`
  width: 16px;
  height: 12px;
  border: 2px solid #f2f2f2;
  border-radius: 3px;
  padding: 2px;
  box-sizing: content-box;
  position: relative;
  margin-right: 4px;

  &::after {
    content: "";
    position: absolute;
    right: -5px;
    top: 3px;
    width: 3px;
    height: 6px;
    background: #f2f2f2;
    border-radius: 0 2px 2px 0;
  }
`;

const BatteryFill = styled.div`
  width: 12px;
  height: 100%;
  background: #f2f2f2;
`;

const Clock = styled.div`
  width: 110px;
  margin: 0 11px 0 7px;
  text-align: right;
  font-size: 17.5px;
  line-height: 24px;
  color: #f2f2f2;
`;
